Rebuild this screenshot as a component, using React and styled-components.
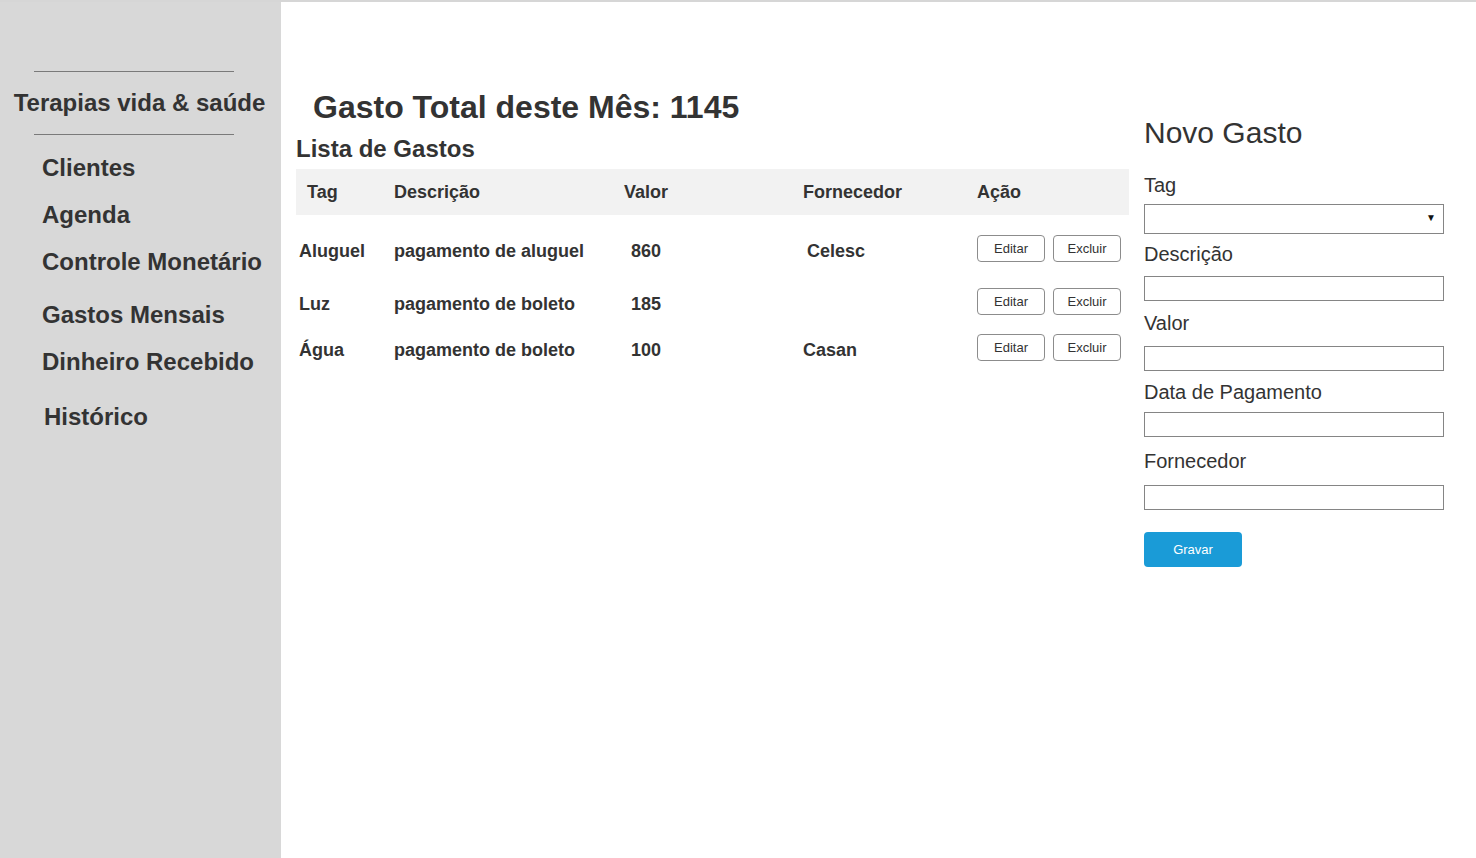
import React from "react";
import styled, { createGlobalStyle } from "styled-components";

const Global = createGlobalStyle`
  html, body { margin: 0; padding: 0; background: #fff; }
  body { font-family: "Liberation Sans", Arial, sans-serif; color: #333; }
  * { box-sizing: border-box; }
`;

const Page = styled.div`
  display: flex;
  min-height: 858px;
  border-top: 2px solid #d6d6d6;
`;

const Sidebar = styled.nav`
  width: 281px;
  flex: 0 0 281px;
  background: #d8d8d8;
  padding-top: 69px;
  display: flex;
  flex-direction: column;
`;

const Rule = styled.hr`
  width: 200px;
  margin: 0 0 0 34px;
  border: 0;
  border-top: 1px solid #7a7a7a;
  height: 0;
`;

const Brand = styled.h1`
  margin: 17px 0 17px;
  padding-right: 2px;
  font-size: 24px;
  line-height: 28px;
  font-weight: bold;
  text-align: center;
  color: #333;
  white-space: nowrap;
`;

const NavItem = styled.a`
  display: block;
  margin: ${(p) => p.$top}px 0 0 ${(p) => p.$left || 42}px;
  font-size: 24px;
  line-height: 28px;
  font-weight: bold;
  color: #333;
  text-decoration: none;
  white-space: nowrap;
`;

const Main = styled.main`
  flex: 1;
  display: grid;
  grid-template-columns: 833px 300px;
  column-gap: 15px;
  padding-left: 15px;
  align-items: start;
`;

const ListSection = styled.section`
  padding-top: 87px;
`;

const TotalTitle = styled.h2`
  margin: 0 0 0 17px;
  font-size: 32px;
  line-height: 36px;
  font-weight: bold;
  color: #333;
`;

const ListTitle = styled.h3`
  margin: 10px 0 0;
  font-size: 24px;
  line-height: 28px;
  font-weight: bold;
  color: #333;
`;

const Table = styled.div`
  margin-top: 6px;
  display: flex;
  flex-direction: column;
`;

const cols = "98px 230px 179px 174px 152px";

const HeadRow = styled.div`
  display: grid;
  grid-template-columns: ${cols};
  height: 46px;
  align-items: center;
  background: #f2f2f2;
`;

const HeadCell = styled.div`
  font-size: 18px;
  font-weight: bold;
  color: #333;
  padding-left: ${(p) => p.$pad || 0}px;
  white-space: nowrap;
`;

const Row = styled.div`
  display: grid;
  grid-template-columns: ${cols};
  height: 46px;
  align-items: center;
  margin-top: ${(p) => p.$top}px;
`;

const Cell = styled.div`
  font-size: 18px;
  font-weight: bold;
  color: #333;
  padding-left: ${(p) => p.$pad || 0}px;
  white-space: nowrap;
`;

const Actions = styled.div`
  display: flex;
  gap: 8px;
  margin-bottom: 5px;
`;

const SmallButton = styled.button`
  width: 68px;
  height: 27px;
  padding: 0;
  font-family: "Liberation Sans", Arial, sans-serif;
  font-size: 13px;
  color: #333;
  background: #fff;
  border: 1px solid #8c8c8c;
  border-radius: 4px;
`;

const FormSection = styled.section`
  padding-top: 113px;
  display: flex;
  flex-direction: column;
`;

const FormTitle = styled.h2`
  margin: 0;
  font-size: 30px;
  line-height: 36px;
  font-weight: normal;
  color: #333;
`;

const Label = styled.label`
  display: block;
  font-size: 20px;
  line-height: 23px;
  color: #333;
  margin-top: ${(p) => p.$top}px;
  margin-bottom: ${(p) => p.$bottom}px;
`;

const SelectBox = styled.div`
  position: relative;
  width: 300px;
  height: 30px;
  border: 1px solid #858585;
  background: #fff;
`;

const Arrow = styled.span`
  position: absolute;
  right: 7px;
  top: 7px;
  font-size: 10px;
  color: #111;
`;

const Input = styled.input`
  width: 300px;
  height: 25px;
  border: 1px solid #858585;
  background: #fff;
  padding: 0 4px;
  font-family: "Liberation Sans", Arial, sans-serif;
  outline: none;
`;

const SaveButton = styled.button`
  margin-top: 22px;
  width: 98px;
  height: 35px;
  border: 0;
  border-radius: 4px;
  background: #1a9bd7;
  color: #fff;
  font-family: "Liberation Sans", Arial, sans-serif;
  font-size: 13px;
  padding: 0;
`;

const nav = [
  { label: "Clientes", top: 19 },
  { label: "Agenda", top: 19 },
  { label: "Controle Monetário", top: 19 },
  { label: "Gastos Mensais", top: 25 },
  { label: "Dinheiro Recebido", top: 19 },
  { label: "Histórico", top: 27, left: 44 },
];

const rows = [
  { tag: "Aluguel", desc: "pagamento de aluguel", valor: "860", forn: "Celesc", fornPad: 4, top: 13 },
  { tag: "Luz", desc: "pagamento de boleto", valor: "185", forn: "", fornPad: 0, top: 7 },
  { tag: "Água", desc: "pagamento de boleto", valor: "100", forn: "Casan", fornPad: 0, top: 0 },
];

export default function App() {
  return (
    <>
      <Global />
      <Page>
        <Sidebar>
          <Rule />
          <Brand>Terapias vida &amp; saúde</Brand>
          <Rule />
          {nav.map((n) => (
            <NavItem key={n.label} href="#" $top={n.top} $left={n.left}>
              {n.label}
            </NavItem>
          ))}
        </Sidebar>
        <Main>
          <ListSection>
            <TotalTitle>Gasto Total deste Mês: 1145</TotalTitle>
            <ListTitle>Lista de Gastos</ListTitle>
            <Table>
              <HeadRow>
                <HeadCell $pad={11}>Tag</HeadCell>
                <HeadCell>Descrição</HeadCell>
                <HeadCell>Valor</HeadCell>
                <HeadCell>Fornecedor</HeadCell>
                <HeadCell>Ação</HeadCell>
              </HeadRow>
              {rows.map((r) => (
                <Row key={r.tag} $top={r.top}>
                  <Cell $pad={3}>{r.tag}</Cell>
                  <Cell>{r.desc}</Cell>
                  <Cell $pad={7}>{r.valor}</Cell>
                  <Cell $pad={r.fornPad}>{r.forn}</Cell>
                  <Actions>
                    <SmallButton>Editar</SmallButton>
                    <SmallButton>Excluir</SmallButton>
                  </Actions>
                </Row>
              ))}
            </Table>
          </ListSection>
          <FormSection>
            <FormTitle>Novo Gasto</FormTitle>
            <Label $top={23} $bottom={7}>Tag</Label>
            <SelectBox>
              <Arrow>▼</Arrow>
            </SelectBox>
            <Label $top={9} $bottom={10}>Descrição</Label>
            <Input />
            <Label $top={11} $bottom={11}>Valor</Label>
            <Input />
            <Label $top={10} $bottom={8}>Data de Pagamento</Label>
            <Input />
            <Label $top={13} $bottom={12}>Fornecedor</Label>
            <Input />
            <SaveButton>Gravar</SaveButton>
          </FormSection>
        </Main>
      </Page>
    </>
  );
}
